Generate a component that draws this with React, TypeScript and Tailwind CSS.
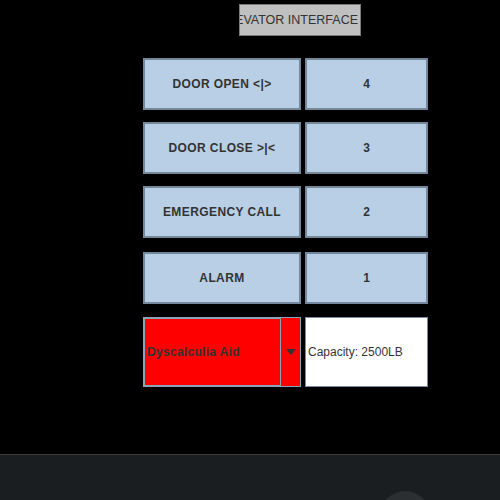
const rows = [
  { label: "DOOR OPEN <|>", floor: "4", top: "mt-[22px]" },
  { label: "DOOR CLOSE >|<", floor: "3", top: "mt-3" },
  { label: "EMERGENCY CALL", floor: "2", top: "mt-3" },
  { label: "ALARM", floor: "1", top: "mt-[14px]" },
];

export default function App() {
  return (
    <div className="w-[500px] h-[500px] bg-black flex flex-col font-['Liberation_Sans',Arial,sans-serif] text-[#333333] overflow-hidden">
      <div className="pt-1 pl-[239px]">
        {/* title button, left side of the label is clipped like in swing */}
        <div className="w-[122px] h-[32px] bg-[#c0c0c0] border border-[#7a7a7a] flex items-center justify-end overflow-hidden pr-[2px]">
          <span className="text-[12.5px] whitespace-nowrap">ELEVATOR INTERFACE</span>
        </div>
      </div>

      <div className="pl-[143px] flex flex-col">
        {rows.map((r) => (
          <div key={r.floor} className={`flex gap-1 ${r.top}`}>
            <div className="w-[158px] h-[52px] bg-[#b8cfe5] border-2 border-[#74879b] flex items-center justify-center text-[12px] font-bold tracking-[0.4px]">
              {r.label}
            </div>
            <div className="w-[123px] h-[52px] bg-[#b8cfe5] border-2 border-[#74879b] flex items-center justify-center text-[12px] font-bold">
              {r.floor}
            </div>
          </div>
        ))}

        <div className="flex gap-1 mt-[13px]">
          <div className="w-[158px] h-[70px] flex border border-[#8ea2b8]">
            <div className="flex-1 bg-[#ff0000] border border-[#8ea2b8] flex items-center pl-[2px] text-[12px] font-bold tracking-[0.3px]">
              Dyscalculia Aid
            </div>
            <div className="w-[19px] bg-[#ff0000] flex items-center justify-center">
              <svg width="10" height="6" viewBox="0 0 10 6">
                <path d="M0 0 L10 0 L5 6 Z" fill="#333333" />
              </svg>
            </div>
          </div>
          <div className="w-[123px] h-[70px] bg-white border border-[#7a8a9a] flex items-center pl-[2px] text-[12px]">
            Capacity: 2500LB
          </div>
        </div>
      </div>

      <div className="mt-auto h-[46px] bg-[#1b1e20] border-t border-[#3c3c3c] relative overflow-hidden">
        <div className="absolute left-[380px] top-[36px] w-[50px] h-[50px] rounded-full bg-[#2c2f32]" />
      </div>
    </div>
  );
}
